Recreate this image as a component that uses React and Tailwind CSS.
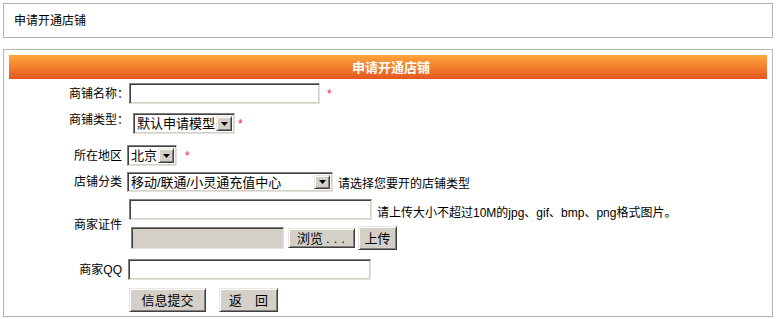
const inset =
  "border border-[#808080] border-r-[#e4e1db] border-b-[#e4e1db] shadow-[inset_1px_1px_0_#404040,inset_-1px_-1px_0_#d4d0c8]";
const raised =
  "border border-[#e8e6e1] border-r-[#404040] border-b-[#404040] shadow-[inset_1px_1px_0_#ffffff,inset_-1px_-1px_0_#808080] bg-[#d4d0c8]";

function Star({ className }) {
  return <span className={`text-[12px] leading-none text-[#ff1a4a] ${className}`}>*</span>;
}

function Dropdown({ box, text }) {
  return (
    <div className={`flex items-center bg-white p-[2px] ${inset} ${box}`}>
      <span className="flex-1 whitespace-nowrap pl-[1px] text-[13px] leading-none">{text}</span>
      <span className={`flex h-full w-[16px] items-center justify-center ${raised}`}>
        <svg width="7" height="4" viewBox="0 0 7 4">
          <path d="M0 0h7L3.5 4z" fill="#000" />
        </svg>
      </span>
    </div>
  );
}

function Button({ box, children }) {
  return (
    <button
      type="button"
      className={`flex items-center justify-center whitespace-pre text-[13px] leading-none text-black ${raised} ${box}`}
    >
      {children}
    </button>
  );
}

export default function App() {
  return (
    <div
      className="p-[3px] text-[12px] leading-none text-black"
      style={{ fontFamily: '"Liberation Sans", "Noto Sans CJK SC", sans-serif' }}
    >
      <div className="flex h-[35px] w-[770px] items-center border border-[#b4b4b4] pl-[10px]">
        申请开通店铺
      </div>

      <div className="mt-[11px] h-[268px] w-[770px] border border-[#b4b4b4] px-[5px] pt-[5px]">
        <div className="flex h-[24px] items-center justify-center bg-gradient-to-b from-[#fea63c] to-[#e3561e] pl-[6px] text-[13px] font-bold text-white">
          申请开通店铺
        </div>

        {/* 商铺名称 */}
        <div className="mt-[4px] flex h-[21px] items-center">
          <div className="w-[120px] text-right">商铺名称：</div>
          <input className={`h-[21px] w-[191px] bg-white outline-none ${inset}`} />
          <Star className="ml-[7px]" />
        </div>

        {/* 商铺类型 */}
        <div className="mt-[9px] flex h-[21px] items-center">
          <div className="w-[120px] pb-[8px] text-right">商铺类型：</div>
          <Dropdown box="ml-[4px] h-[21px] w-[102px]" text="默认申请模型" />
          <Star className="ml-[3px]" />
        </div>

        {/* 所在地区 */}
        <div className="mt-[11px] flex h-[21px] items-center">
          <div className="w-[113px] text-right">所在地区</div>
          <Dropdown box="ml-[5px] h-[21px] w-[50px]" text="北京" />
          <Star className="ml-[8px]" />
        </div>

        {/* 店铺分类 */}
        <div className="mt-[6px] flex h-[20px] items-center">
          <div className="w-[113px] text-right">店铺分类</div>
          <Dropdown box="ml-[5px] h-[20px] w-[206px]" text="移动/联通/小灵通充值中心" />
          <span className="ml-[5px] pt-[3px]">请选择您要开的店铺类型</span>
        </div>

        {/* 商家证件 */}
        <div className="mt-[7px] flex items-center">
          <div className="w-[113px] text-right">商家证件</div>
          <div className="ml-[7px] flex flex-col">
            <div className="flex h-[21px] items-center">
              <input className={`h-[21px] w-[243px] bg-white outline-none ${inset}`} />
              <span className="ml-[5px] pt-[6px]">请上传大小不超过10M的jpg、gif、bmp、png格式图片。</span>
            </div>
            <div className="mt-[6px] flex h-[24px] items-center">
              <div className={`ml-[2px] h-[22px] w-[153px] bg-[#d4d0c8] ${inset}`} />
              <Button box="ml-[4px] h-[20px] w-[67px] pl-[3px]">
                浏览<span className="ml-[3px] tracking-[4px]">...</span>
              </Button>
              <Button box="ml-[3px] h-[24px] w-[39px]">上传</Button>
            </div>
          </div>
        </div>

        {/* 商家QQ */}
        <div className="mt-[9px] flex h-[21px] items-center">
          <div className="w-[113px] text-right">商家QQ</div>
          <input className={`ml-[6px] h-[21px] w-[243px] bg-white outline-none ${inset}`} />
        </div>

        <div className="mt-[8px] flex items-center pl-[120px]">
          <Button box="h-[24px] w-[77px]">信息提交</Button>
          <Button box="ml-[13px] h-[24px] w-[59px]">返　回</Button>
        </div>
      </div>
    </div>
  );
}
